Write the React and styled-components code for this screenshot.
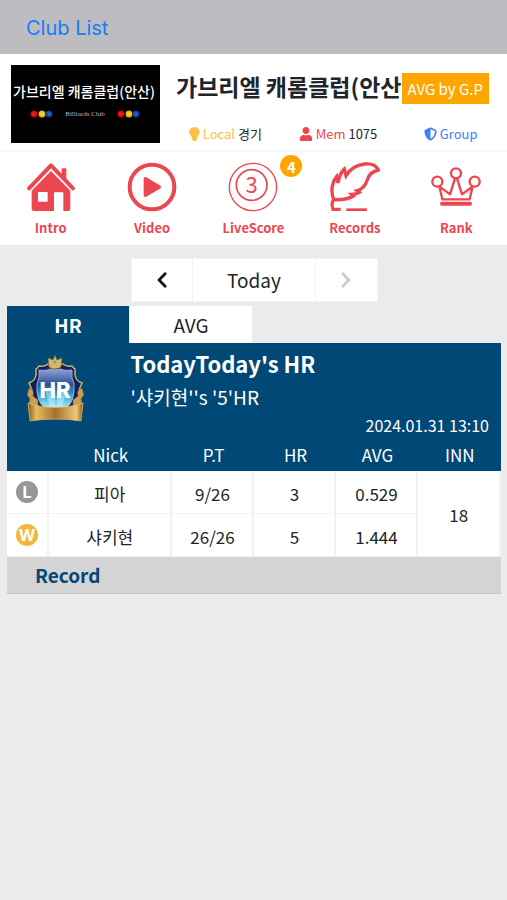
import React, { useState } from 'react'
import styled, { createGlobalStyle } from 'styled-components'
import { FaChevronLeft, FaChevronRight, FaShieldAlt, FaUser } from 'react-icons/fa'

const GlobalStyle = createGlobalStyle`
    :root {
        --color-navy: #004876;
        --color-red: #ec4650;
        --color-orange: #ffa500;
        --color-yellow: #fcc042;
        --color-blue: #3d7ff5;
        --color-text: #212529;
        --color-line: #f0f2f3;
    }

    * {
        box-sizing: border-box;
    }

    body {
        margin: 0;
        background: #ebebeb;
        color: var(--color-text);
        font-family: 'Noto Sans CJK KR', 'Noto Sans', sans-serif;
    }

    button {
        border: none;
        padding: 0;
        font-family: inherit;
        cursor: pointer;
    }

    a {
        text-decoration: none;
    }
`

const TopBar = styled.header`
    display: flex;
    align-items: center;
    height: 54px;
    padding: 2px 26px 0;
    background: #bdbcc1;
`

const BackLink = styled.a`
    font-family: Inter, sans-serif;
    font-size: 20px;
    color: #147efb;
`

const ClubHeader = styled.section`
    display: grid;
    grid-template-columns: 1fr 2fr;
    height: 98px;
    background: #fff;
    border-bottom: 2px solid #f8f8f8;
`

const LogoLink = styled.a`
    padding: 11px 9px 7px 11px;

    svg {
        display: block;
        width: 100%;
        height: 78px;
        background: #000;
    }
`

const ClubInfo = styled.div`
    display: flex;
    flex-direction: column;
    justify-content: space-between;
    min-width: 0;
    padding: 14px 0 4px;
`

const TitleRow = styled.div`
    display: flex;
    align-items: flex-end;
    padding: 0 18px 0 7px;
`

const ClubName = styled.h1`
    flex: 1;
    margin: 0;
    overflow: hidden;
    white-space: nowrap;
    font-size: 23px;
    line-height: 36px;
`

const AverageTag = styled.span`
    padding: 0 6px;
    background: var(--color-orange);
    color: #fff;
    font-size: 15px;
    line-height: 31px;
    white-space: nowrap;
`

const Stats = styled.div`
    display: grid;
    grid-template-columns: repeat(3, 1fr);
    font-size: 13px;
    line-height: 24px;
`

const Stat = styled.div`
    display: flex;
    align-items: center;
    justify-content: center;
    gap: 3px;

    svg {
        width: ${({ $icon_width }) => $icon_width}px;
        height: 14px;
        color: ${({ $color }) => $color};
    }
`

const StatLabel = styled.span`
    color: ${({ $color }) => $color};
`

const Menu = styled.nav`
    display: grid;
    grid-template-columns: repeat(5, 1fr);
    height: 93px;
    padding-top: 10px;
    background: #fff;
`

const MenuLink = styled.a`
    display: flex;
    flex-direction: column;
    align-items: center;
    gap: 4px;
    color: var(--color-red);
    font-size: 13px;
    font-weight: bold;
    line-height: 24px;
`

const IconWrapper = styled.span`
    position: relative;
    height: 50px;

    svg {
        display: block;
        width: 50px;
        height: 50px;
    }
`

const CountBadge = styled.span`
    position: absolute;
    top: -7px;
    right: -24px;
    width: 22px;
    height: 22px;
    border-radius: 50%;
    background: var(--color-orange);
    color: #fff;
    font-size: 15px;
    line-height: 23px;
    text-align: center;
`

const Main = styled.main`
    padding: 13px 6px 0 7px;
`

const DateSwitch = styled.div`
    display: grid;
    grid-template-columns: 1fr 2fr 1fr;
    gap: 1px;
    width: 50%;
    height: 44px;
    margin: 0 auto 4px;
    border: 1px solid #f0f2f3;
    background: #f0f2f3;
`

const DateButton = styled.button`
    display: flex;
    align-items: center;
    justify-content: center;
    background: #fff;
    color: #111;
    font-size: 18px;

    &:disabled {
        color: #ccc;
        cursor: default;
    }
`

const DateLabel = styled.div`
    background: #fff;
    font-size: 19px;
    line-height: 42px;
    text-align: center;
`

const Tabs = styled.div`
    display: grid;
    grid-template-columns: repeat(4, 1fr);
    gap: 1px;
    padding-right: 3px;
`

const Tab = styled.button`
    height: 37px;
    background: ${({ $active }) => ($active ? 'var(--color-navy)' : '#fff')};
    color: ${({ $active }) => ($active ? '#fff' : 'var(--color-text)')};
    font-size: 19px;
    font-weight: ${({ $active }) => ($active ? 'bold' : 'normal')};
    line-height: 36px;
`

const Highlight = styled.section`
    display: grid;
    grid-template-columns: 1fr 3fr;
    background: var(--color-navy);
    color: #fff;

    > svg {
        width: 62px;
        height: 72px;
        margin: 10px 0 0 17px;
    }
`

const HighlightTitle = styled.h2`
    margin: 0;
    font-size: 22px;
    line-height: 40px;
`

const HighlightText = styled.p`
    margin: 0;
    font-size: 19px;
    line-height: 28px;
`

const HighlightDate = styled.time`
    display: block;
    padding-right: 12px;
    font-size: 16px;
    line-height: 28px;
    text-align: right;
`

const ScoreTable = styled.table`
    width: 100%;
    table-layout: fixed;
    border-spacing: 0;
    background: #fff;
    font-size: 17px;
    text-align: center;

    th {
        height: 32px;
        padding: 0;
        background: var(--color-navy);
        color: #fff;
        font-weight: normal;
        line-height: 28px;
    }

    td {
        height: 43px;
        padding: 3px 0 0;
        border-right: 2px solid var(--color-line);
        border-bottom: 1px solid var(--color-line);
        line-height: 24px;
    }
`

const Column = styled.col`
    width: ${({ $width }) => $width};
`

const ResultMark = styled.span`
    display: block;
    width: 22px;
    height: 22px;
    margin: 0 auto 4px;
    border-radius: 50%;
    background: ${({ $win }) => ($win ? '#f3b63a' : '#979797')};
    color: #fff;
    font-family: Inter, sans-serif;
    font-size: 16px;
    font-weight: bold;
    line-height: 22px;
`

const RecordTitle = styled.h3`
    margin: 0;
    padding-left: 28px;
    border-bottom: 1px solid #c8c8c8;
    background: #d4d4d4;
    color: var(--color-navy);
    font-size: 19px;
    line-height: 36px;
`

const ClubLogo = () => (
    <svg viewBox="0 0 149 78" role="img" aria-label="가브리엘 캐롬클럽(안산)">
        <defs>
            {[
                ['red', '#ff2a1a', '#c00000'],
                ['yellow', '#ffe14a', '#e0a800'],
                ['blue', '#2f6fd8', '#0a3280'],
            ].map(([id, light, dark]) => (
                <radialGradient id={`ball-${id}`} key={id}>
                    <stop offset="0" stopColor={light} />
                    <stop offset="1" stopColor={dark} />
                </radialGradient>
            ))}
        </defs>
        <text x="73" y="32" fill="#fff" fontSize="14" fontWeight="500" textAnchor="middle">
            가브리엘 캐롬클럽(안산)
        </text>
        {[23, 110].map(x => (
            <g key={x}>
                <circle cx={x} cy="49" r="3.5" fill="url(#ball-red)" />
                <circle cx={x + 8} cy="49" r="3.5" fill="url(#ball-yellow)" />
                <circle cx={x + 15} cy="49" r="3.5" fill="url(#ball-blue)" />
            </g>
        ))}
        <text
            x="74"
            y="51"
            fill="#bbb"
            fontFamily="Liberation Serif, serif"
            fontSize="7"
            textAnchor="middle"
        >
            Billiards Club
        </text>
    </svg>
)

const BulbIcon = () => (
    <svg viewBox="0 0 11 14" fill="currentColor" aria-hidden="true">
        <path d="M5.5 0A5.3 5.3 0 0 0 .2 5.2C.2 7.5 2 8.6 2.9 10.5V12l1.300 2h2.600l1.300-2v-1.500C9 8.600 10.800 7.500 10.800 5.200A5.300 5.300 0 0 0 5.500 0z" />
    </svg>
)

const HouseIcon = () => (
    <svg viewBox="0 0 150 150" fill="currentColor" aria-hidden="true">
        <path
            d="M9 79L75 10l66 69"
            fill="none"
            stroke="currentColor"
            strokeWidth="12"
            strokeLinecap="round"
            strokeLinejoin="round"
        />
        <path d="M107 40V22q0-3 3-3h8q3 0 3 3v34z" />
        <path
            fillRule="evenodd"
            d="M17 86L75 27l58 59v54q0 7-7 7h-14V91H84v56H24q-7 0-7-7zM36 90v29h29V90z"
        />
    </svg>
)

const PlayIcon = () => (
    <svg viewBox="0 0 150 150" fill="currentColor" aria-hidden="true">
        <circle cx="75" cy="75" r="67" fill="none" stroke="currentColor" strokeWidth="12" />
        <path
            d="M55 50v50l42-25z"
            stroke="currentColor"
            strokeWidth="10"
            strokeLinejoin="round"
        />
    </svg>
)

const ScoreIcon = () => (
    <svg viewBox="0 0 150 150" fill="none" stroke="currentColor" aria-hidden="true">
        <circle cx="75" cy="75" r="71" strokeWidth="4" />
        <circle cx="71" cy="69" r="46" strokeWidth="5" />
        <text
            x="71"
            y="93"
            fill="currentColor"
            stroke="none"
            fontSize="66"
            fontWeight="400"
            textAnchor="middle"
        >
            3
        </text>
    </svg>
)

const FeatherIcon = () => (
    <svg
        viewBox="0 0 150 150"
        fill="none"
        stroke="currentColor"
        strokeWidth="10"
        strokeLinejoin="miter"
        aria-hidden="true"
    >
        <path d="M11 113C5 98 5 84 7 72 9 60 13 51 20 43l4 20C27 45 32 32 43 21l5 20C59 22 80 9 104 6c20-2 35 4 41 18-19 4-28 13-33 29-6 19-16 29-31 33l7 5c-8 5-15 6-23 6l5 5c-14 9-38 12-59 11-6 7-5 20-2 29h23" />
        <path d="M49 143h62" strokeWidth="8" />
    </svg>
)

const CrownIcon = () => (
    <svg viewBox="0 0 150 150" fill="none" stroke="currentColor" aria-hidden="true">
        <g strokeWidth="7" strokeLinejoin="round">
            <circle cx="75" cy="34" r="15" />
            <circle cx="19" cy="59" r="15" />
            <circle cx="131" cy="59" r="15" />
            <path d="M25 73l9 39h82l9-39-32 24-15-48h-6L57 97z" />
        </g>
        <path d="M33 125h84" strokeWidth="12" strokeLinecap="round" />
    </svg>
)

const HrEmblem = () => (
    <svg viewBox="0 0 62 72" role="img" aria-label="HR">
        <defs>
            <linearGradient id="emblem-gold" x1="0" x2="1">
                <stop offset="0" stopColor="#8a5a1c" />
                <stop offset=".15" stopColor="#e3bb62" />
                <stop offset=".5" stopColor="#a8712c" />
                <stop offset=".88" stopColor="#edca78" />
                <stop offset="1" stopColor="#8a5a1c" />
            </linearGradient>
            <linearGradient id="emblem-shield" x1="0" y1="0" x2="0" y2="1">
                <stop offset="0" stopColor="#8ea3cf" />
                <stop offset=".4" stopColor="#2c4f9a" />
                <stop offset=".65" stopColor="#2f9fcd" />
                <stop offset="1" stopColor="#a8eef8" />
            </linearGradient>
        </defs>
        <path
            d="M12 16q2-1 3-3 6 1 9-2h15q3 3 9 2 1 2 3 3v6q1 6 7 8l-3 7 3 19H5l3-19-3-7q6-2 7-8z"
            fill="#10205c"
            stroke="#cfb16a"
            strokeWidth="1.5"
        />
        <path
            d="M31 2l2 5 5-2-1 9q-6 4-12 0l-1-9 5 2z"
            fill="#dcb65c"
            stroke="#80602a"
            strokeWidth=".6"
        />
        <circle cx="31" cy="9" r="1.6" fill="#3ab5e5" />
        <path
            d="M15 17q8 1 11-1 6 2 11 0 3 2 11 1-1 8 2 14 1 18-8 24H21q-9-6-8-24 3-6 2-14z"
            fill="url(#emblem-shield)"
            stroke="#9caed6"
        />
        <path d="M21 37l5 17h5V37zm12 0v17h5l5-17z" fill="#d3fbff" opacity=".45" />
        <path
            d="M5 35q6 2 4 8l5 4v7H4l2-8-3-4zm53 0q-6 2-4 8l-5 4v7h10l-2-8 3-4z"
            fill="#c7a04f"
            stroke="#75501d"
            strokeWidth=".6"
        />
        <path
            d="M4 50l6 2q21 5 43 0l6-2-2 18q-26-4-51 0z"
            fill="url(#emblem-gold)"
            stroke="#e3c06b"
            strokeWidth=".7"
        />
        <text
            x="31"
            y="45"
            fill="#fff"
            fontFamily="Inter, sans-serif"
            fontSize="22"
            fontWeight="800"
            textAnchor="middle"
        >
            HR
        </text>
    </svg>
)

const menu_items = [
    { label: 'Intro', Icon: HouseIcon },
    { label: 'Video', Icon: PlayIcon },
    { label: 'LiveScore', Icon: ScoreIcon, count: 4 },
    { label: 'Records', Icon: FeatherIcon },
    { label: 'Rank', Icon: CrownIcon },
]

const columns = [
    { name: '', width: '8.5%' },
    { name: 'Nick', width: '25%' },
    { name: 'P.T', width: '16.6%' },
    { name: 'HR', width: '16.6%' },
    { name: 'AVG', width: '16.6%' },
    { name: 'INN', width: '16.7%' },
]

const players = [
    { nick: '피아', point: '9/26', high_run: 3, average: '0.529', win: false },
    { nick: '샤키현', point: '26/26', high_run: 5, average: '1.444', win: true },
]

const App = () => {
    const [tab, setTab] = useState('HR')

    return (
        <>
            <GlobalStyle />
            <TopBar>
                <BackLink href="#clubs">Club List</BackLink>
            </TopBar>
            <ClubHeader>
                <LogoLink href="#club">
                    <ClubLogo />
                </LogoLink>
                <ClubInfo>
                    <TitleRow>
                        <ClubName>가브리엘 캐롬클럽(안산)</ClubName>
                        <AverageTag>AVG by G.P</AverageTag>
                    </TitleRow>
                    <Stats>
                        <Stat $color="var(--color-yellow)" $icon_width={11}>
                            <BulbIcon />
                            <span>
                                <StatLabel $color="var(--color-yellow)">Local</StatLabel> 경기
                            </span>
                        </Stat>
                        <Stat $color="var(--color-red)" $icon_width={14}>
                            <FaUser />
                            <span>
                                <StatLabel $color="var(--color-red)">Mem</StatLabel> 1075
                            </span>
                        </Stat>
                        <Stat $color="var(--color-blue)" $icon_width={13}>
                            <FaShieldAlt />
                            <StatLabel $color="var(--color-blue)">Group</StatLabel>
                        </Stat>
                    </Stats>
                </ClubInfo>
            </ClubHeader>
            <Menu>
                {menu_items.map(({ label, Icon, count }) => (
                    <MenuLink href={`#${label.toLowerCase()}`} key={label}>
                        <IconWrapper>
                            <Icon />
                            {count && <CountBadge>{count}</CountBadge>}
                        </IconWrapper>
                        {label}
                    </MenuLink>
                ))}
            </Menu>
            <Main>
                <DateSwitch>
                    <DateButton aria-label="Previous day">
                        <FaChevronLeft />
                    </DateButton>
                    <DateLabel>Today</DateLabel>
                    <DateButton aria-label="Next day" disabled>
                        <FaChevronRight />
                    </DateButton>
                </DateSwitch>
                <Tabs role="tablist">
                    {['HR', 'AVG'].map(name => (
                        <Tab
                            key={name}
                            role="tab"
                            aria-selected={tab === name}
                            $active={tab === name}
                            onClick={() => setTab(name)}
                        >
                            {name}
                        </Tab>
                    ))}
                </Tabs>
                <Highlight>
                    <HrEmblem />
                    <div>
                        <HighlightTitle>TodayToday's HR</HighlightTitle>
                        <HighlightText>'샤키현''s '5'HR</HighlightText>
                        <HighlightDate>2024.01.31 13:10</HighlightDate>
                    </div>
                </Highlight>
                <ScoreTable>
                    <colgroup>
                        {columns.map(({ name, width }) => (
                            <Column key={name} $width={width} />
                        ))}
                    </colgroup>
                    <thead>
                        <tr>
                            {columns.map(({ name }) => (
                                <th key={name}>{name}</th>
                            ))}
                        </tr>
                    </thead>
                    <tbody>
                        {players.map(({ nick, point, high_run, average, win }, idx) => (
                            <tr key={nick}>
                                <td>
                                    <ResultMark $win={win}>{win ? 'W' : 'L'}</ResultMark>
                                </td>
                                <td>{nick}</td>
                                <td>{point}</td>
                                <td>{high_run}</td>
                                <td>{average}</td>
                                {idx === 0 && <td rowSpan={players.length}>18</td>}
                            </tr>
                        ))}
                    </tbody>
                </ScoreTable>
                <RecordTitle>Record</RecordTitle>
            </Main>
        </>
    )
}

export default App
